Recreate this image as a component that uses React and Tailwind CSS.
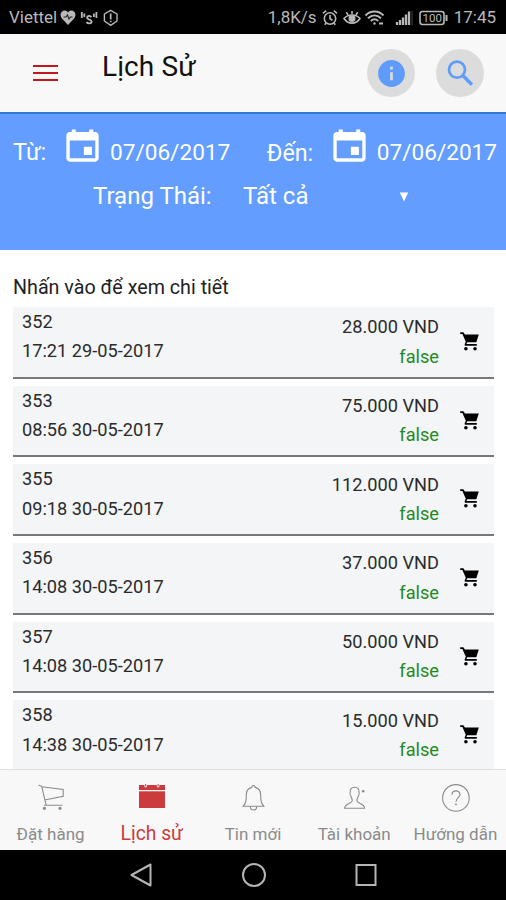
import React from "react";
import { IoMdCalendar, IoMdInformationCircle } from "react-icons/io";

const orders = [
    { id: 352, time: "17:21 29-05-2017", price: "28.000 VND", status: "false" },
    { id: 353, time: "08:56 30-05-2017", price: "75.000 VND", status: "false" },
    { id: 355, time: "09:18 30-05-2017", price: "112.000 VND", status: "false" },
    { id: 356, time: "14:08 30-05-2017", price: "37.000 VND", status: "false" },
    { id: 357, time: "14:08 30-05-2017", price: "50.000 VND", status: "false" },
    { id: 358, time: "14:38 30-05-2017", price: "15.000 VND", status: "false" }
];

const SearchIcon = () => (
    <svg width="28" height="28" viewBox="0 0 28 28" fill="none" stroke="currentColor">
        <circle cx="11" cy="10.7" r="8" strokeWidth="2.7" />
        <path d="M16.6 16.3L26 25.7" strokeWidth="3.4" />
    </svg>
);

// Filled cart shown on every order
const OrderCartIcon = () => (
    <svg className="ml-[21px] mt-[25px]" width="19" height="19" viewBox="0 0 19 19" fill="#000">
        <path d="M0.2 0.2H3.4L4.9 2.6H18.8L16.3 10.2H7.2L6.4 12H16.8V13.8H4.9L4.6 12.4L5.8 9.8L2.4 2H0.2Z" />
        <circle cx="5.9" cy="16.8" r="1.8" />
        <circle cx="15" cy="16.8" r="1.8" />
    </svg>
);

// Outline icons for the bottom tabs
const CartIcon = () => (
    <svg width="28" height="28" viewBox="0 0 28 28" fill="none" stroke="#8b8b8b" strokeWidth="1.1">
        <path d="M1.5 0.9L4.7 2.3L9.2 21.3M4.7 2.7L26.2 5.4V12.4L7.6 16M6.9 21.3H25.6" />
        <circle cx="7.4" cy="24.3" r="1.1" fill="#8b8b8b" />
        <circle cx="23" cy="24.3" r="1.1" fill="#8b8b8b" />
    </svg>
);

const CalendarIcon = () => (
    <svg width="28" height="28" viewBox="0 0 28 28" fill="#cb3a3c">
        <path d="M1 1H6.4V2.6Q7.7 4.3 9 2.6V1H18.8V2.6Q20.1 4.3 21.4 2.6V1H27V6H1Z" />
        <path d="M1 7.3H27V24H1Z" />
        <path d="M7.2 0H8.2V2.6H7.2ZM19.6 0H20.6V2.6H19.6Z" />
    </svg>
);

const BellIcon = () => (
    <svg width="28" height="28" viewBox="0 0 28 28" fill="none" stroke="#8b8b8b" strokeWidth="1.1">
        <path d="M12.8 3.4C12.8 1 16.2 1 16.2 3.4C20.1 4.3 21.7 7.4 21.7 11C21.7 18 22.5 19.5 24.9 22.3H4.1C6.5 19.5 7.3 18 7.3 11C7.3 7.4 8.9 4.3 12.8 3.4Z" />
        <path d="M11.3 22.5C11.3 27.2 17.7 27.2 17.7 22.5" />
    </svg>
);

const UserIcon = () => (
    <svg width="28" height="28" viewBox="0 0 28 28" fill="none" stroke="#8b8b8b" strokeWidth="1.1">
        <path d="M14.6 3.3C11.3 3.3 10.1 5.4 10.2 8.2C9.8 9 10.1 11 10.8 11.6C11.1 13.5 12.3 14.5 12.3 16.5C12.3 20 4.9 19.2 4.6 24.3H24.6C24.3 19.2 16.9 20 16.9 16.5C16.9 14.5 18.1 13.5 18.4 11.6C19.1 11 19.4 9 19 8.2C19.1 5.4 17.9 3.3 14.6 3.3Z" />
        <path d="M21.9 7.3H24.5M23.2 6V8.6" strokeWidth="1.4" />
    </svg>
);

const HelpIcon = () => (
    <svg width="29" height="28" viewBox="0 0 29 28" fill="none" stroke="#8b8b8b" strokeWidth="1.1">
        <circle cx="14.9" cy="13.9" r="13.3" />
        <path d="M11 10.7C11 5.6 19 5.6 19 10.5C19 13.6 15 13.7 15 17.7" strokeWidth="1.2" />
        <circle cx="15" cy="20.4" r="0.7" fill="#8b8b8b" strokeWidth="0.6" />
    </svg>
);

const tabs = [
    { label: "Đặt hàng", Icon: CartIcon },
    { label: "Lịch sử", Icon: CalendarIcon, active: true },
    { label: "Tin mới", Icon: BellIcon },
    { label: "Tài khoản", Icon: UserIcon },
    { label: "Hướng dẫn", Icon: HelpIcon }
];

const StatusBar = () => (
    <div className="flex h-[34px] items-center justify-between bg-black pl-[9px] pr-[10px] pt-[2px] text-[17px] text-[#b9b9b9]">
        <div className="flex items-center">
            <span>Viettel</span>
            <svg className="ml-[3px]" width="60" height="18" viewBox="0 0 60 18" fill="none" stroke="#b9b9b9" strokeWidth="1.4">
                <path d="M8 16L1.5 9C-2 3 5 -1 8 3.5C11 -1 18 3 14.5 9Z" fill="#b9b9b9" stroke="none" />
                <path d="M3.5 8H6L7.5 6L9 10L10.4 8H12.5" stroke="#222" strokeWidth="1.1" />
                <path d="M21.8 3V9M24.3 4.5V8M36.4 3V9M33.9 4.5V8" strokeWidth="1.8" />
                <path d="M31.4 8.2C30.3 6.3 27.1 6.7 27.1 8.7C27.1 11 31.6 10.2 31.6 12.6C31.6 15 27.6 15 26.6 13" strokeWidth="1.8" />
                <path d="M57 5V12L50.7 16.4L44.4 12V5L50.7 1.4Z" strokeLinejoin="round" />
                <path d="M50.7 4.5V10.5M50.7 11.8V13.3" strokeWidth="1.7" />
            </svg>
        </div>
        <div className="flex items-center">
            <span>1,8K/s</span>
            <svg className="ml-[5px]" width="132" height="18" viewBox="0 0 132 18" fill="none" stroke="#b9b9b9" strokeWidth="1.6">
                <circle cx="8" cy="9.5" r="5.7" />
                <path d="M8 6V9.7L10.5 11.2M1 4.3L4.2 1.7M15 4.3L11.8 1.7M4 14L2.7 15.8M12 14L13.3 15.8" />
                <path d="M22 9.5C26 4.8 34 4.8 38 9.5C34 15.7 26 15.7 22 9.5ZM30 2V5M24.3 3.2L26 5.7M35.7 3.2L34 5.7" />
                <circle cx="30" cy="9.5" r="2.7" fill="#b9b9b9" />
                <path d="M43.5 6.5C48.5 1.2 56.5 1.2 61.5 6.5M46 9.3C50 5.5 55 5.5 59 9.3M48.8 12C51 10 54 10 56.2 12" strokeWidth="1.9" />
                <circle cx="52.5" cy="14.5" r="1.2" fill="#b9b9b9" stroke="none" />
                <path d="M57 14.5H61" strokeWidth="2" />
                <path d="M75 13V16M78 11V16M81 8.5V16M84 5.5V16M87 2.5V16" strokeWidth="2.3" />
                <path d="M90 2V16" stroke="#3b3b3b" strokeWidth="1.2" />
                <rect x="98" y="2.5" width="24" height="13" rx="2.5" />
                <path d="M124.5 6V12" strokeWidth="2" />
                <text x="110.2" y="13.2" textAnchor="middle" fontSize="11.5" fontFamily="Roboto" fill="#b9b9b9" stroke="none">100</text>
            </svg>
            <span>17:45</span>
        </div>
    </div>
);

const Header = () => (
    <header className="flex h-[78px] items-center bg-[#f8f8f8] pl-[33px] pr-[22px]">
        <button className="flex w-[25px] flex-col gap-[5px]" aria-label="Menu">
            <span className="h-[2px] w-full bg-[#c4171b]"></span>
            <span className="h-[2px] w-full bg-[#c4171b]"></span>
            <span className="h-[2px] w-full bg-[#c4171b]"></span>
        </button>
        <h1 className="mb-3 ml-11 flex-1 text-[28px] tracking-[0.1px] text-[#111]">Lịch Sử</h1>
        <div className="flex gap-[21px] text-[#5f9cfa]">
            <button className="flex size-12 items-center justify-center rounded-full bg-[#dcdcdc]">
                <IoMdInformationCircle size={33} />
            </button>
            <button className="flex size-12 items-center justify-center rounded-full bg-[#dcdcdc]">
                <SearchIcon />
            </button>
        </div>
    </header>
);

const Filters = () => (
    <section className="h-[138px] border-t-2 border-[#2f77d2] bg-[#629dff] text-[23px] text-white">
        <div className="flex h-[62px] items-center justify-between pl-[13px] pr-[9px]">
            <div className="flex items-center">
                <span className="w-[48px] pt-4 text-[23.5px]">Từ:</span>
                <IoMdCalendar size={43} />
                <span className="ml-[6px] pt-4 text-[22.6px]">07/06/2017</span>
            </div>
            <div className="flex items-center">
                <span className="w-[61px] pt-4 text-[23.3px]">Đến:</span>
                <IoMdCalendar size={43} />
                <span className="ml-[6px] pt-4 text-[22.6px]">07/06/2017</span>
            </div>
        </div>
        <div className="mt-[2px] flex h-9 items-center pl-[93px] text-[24px]">
            <span className="w-[150px]">Trạng Thái:</span>
            <span className="w-[156px]">Tất cả</span>
            <svg className="mt-[2px]" width="10" height="10" viewBox="0 0 10 10" fill="#fff">
                <path d="M0.8 0.5H9.2L5 9.5Z" />
            </svg>
        </div>
    </section>
);

const OrderRow = ({ order }) => (
    <li className="mb-[7px] flex h-[71.7px] shrink-0 border-b-2 border-[#77797b] bg-[#f3f5f7] pl-[9px] pr-[15px] text-[18.2px] text-[#2b2b2b]">
        <div className="flex-1 leading-[29.2px]">
            <p>{order.id}</p>
            <p>{order.time}</p>
        </div>
        <div className="pt-[5.2px] text-right leading-[29.5px]">
            <p>{order.price}</p>
            <p className="text-[#1f8a1f]">{order.status}</p>
        </div>
        <OrderCartIcon />
    </li>
);

const TabBar = () => (
    <nav className="flex h-[81px] shrink-0 border-t border-[#dedede] bg-[#f8f8f8] pt-[14px]">
        {tabs.map(({ label, Icon, active }) => (
            <div key={label} className="flex flex-1 flex-col items-center whitespace-nowrap">
                <Icon />
                <span className={active ? "mt-[8px] text-[19.3px] leading-7 text-[#cb3a3c]" : "mt-[8px] text-[17px] leading-7 text-[#8b8b8b]"}>
                    {label}
                </span>
            </div>
        ))}
    </nav>
);

// Android back / home / recent buttons
const SystemNav = () => (
    <div className="flex h-[50px] shrink-0 items-center justify-center gap-[88px] bg-black pl-px">
        <svg width="24" height="24" viewBox="0 0 24 24" fill="none" stroke="#b5b5b5" strokeWidth="2" strokeLinejoin="round">
            <path d="M1.5 12L20.5 1.5V22.5Z" />
        </svg>
        <svg width="24" height="24" viewBox="0 0 24 24" fill="none" stroke="#b5b5b5" strokeWidth="2">
            <circle cx="12" cy="12" r="11" />
        </svg>
        <svg width="24" height="24" viewBox="0 0 24 24" fill="none" stroke="#b5b5b5" strokeWidth="2">
            <rect x="2.5" y="2" width="19" height="20" />
        </svg>
    </div>
);

const App = () => {
    return (
        <div className="flex h-[900px] w-[506px] flex-col overflow-hidden bg-white font-[Roboto,sans-serif]">
            <StatusBar />
            <Header />
            <Filters />
            <main className="min-h-0 flex-1 overflow-hidden pl-[13px] pr-[12px] pt-[24px]">
                <p className="h-[33px] text-[19.7px] leading-[28px] text-[#222]">Nhấn vào để xem chi tiết</p>
                <ul className="flex flex-col">
                    {orders.map((order) => (
                        <OrderRow key={order.id} order={order} />
                    ))}
                </ul>
            </main>
            <TabBar />
            <SystemNav />
        </div>
    );
};

export default App;
